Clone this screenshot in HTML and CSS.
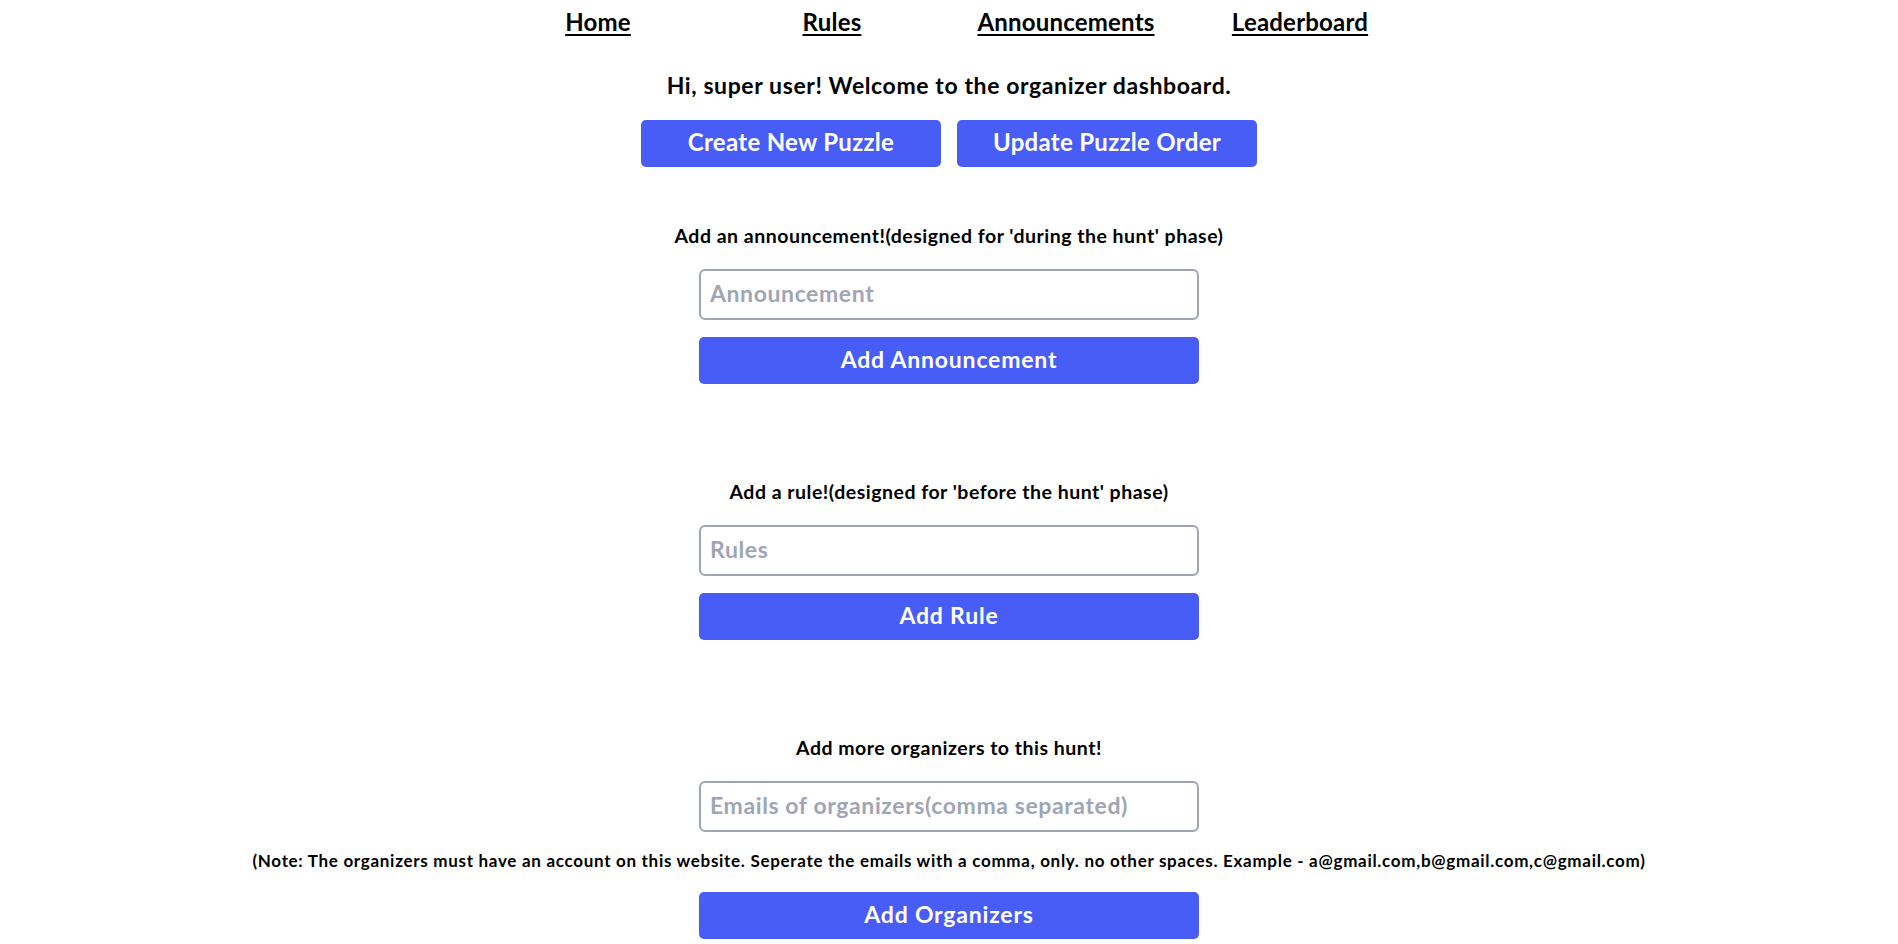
FILE: index.html
```html
<!DOCTYPE html>
<html lang="en">
<head>
<meta charset="utf-8">
<title>Organizer Dashboard</title>
<link rel="stylesheet" href="styles.css">
</head>
<body>
<nav class="nav">
  <a class="nav-link" href="#">Home</a>
  <a class="nav-link" href="#">Rules</a>
  <a class="nav-link" href="#">Announcements</a>
  <a class="nav-link" href="#">Leaderboard</a>
</nav>
<main class="main">
  <h1 class="welcome">Hi, super user! Welcome to the organizer dashboard.</h1>
  <div class="top-actions">
    <button class="btn btn-top">Create New Puzzle</button>
    <button class="btn btn-top">Update Puzzle Order</button>
  </div>

  <section class="section section-first">
    <h2 class="section-title">Add an announcement!(designed for 'during the hunt' phase)</h2>
    <input class="field" type="text" placeholder="Announcement">
    <button class="btn btn-wide">Add Announcement</button>
  </section>

  <section class="section">
    <h2 class="section-title">Add a rule!(designed for 'before the hunt' phase)</h2>
    <input class="field" type="text" placeholder="Rules">
    <button class="btn btn-wide">Add Rule</button>
  </section>

  <section class="section">
    <h2 class="section-title">Add more organizers to this hunt!</h2>
    <input class="field" type="text" placeholder="Emails of organizers(comma separated)">
    <p class="note">(Note: The organizers must have an account on this website. Seperate the emails with a comma, only. no other spaces. Example - a@gmail.com,b@gmail.com,c@gmail.com)</p>
    <button class="btn btn-wide btn-after-note">Add Organizers</button>
  </section>
</main>
</body>
</html>
```

FILE: styles.css
```css
* {
  box-sizing: border-box;
}

html, body {
  margin: 0;
  padding: 0;
  background: #ffffff;
}

body {
  font-family: "Lato", "Liberation Sans", sans-serif;
  font-weight: 700;
  color: #000000;
}

.nav {
  display: grid;
  grid-template-columns: repeat(4, 234px);
  justify-content: center;
  padding-top: 7px;
}

.nav-link {
  text-align: center;
  font-size: 24px;
  line-height: 30px;
  letter-spacing: 0.2px;
  color: #000000;
  text-decoration: underline;
  text-decoration-thickness: 2px;
  text-underline-offset: 3px;
}

.main {
  display: flex;
  flex-direction: column;
  align-items: center;
}

.welcome {
  margin: 34px 0 0;
  font-size: 23px;
  line-height: 28px;
  letter-spacing: 0.6px;
  font-weight: 700;
}

.top-actions {
  display: flex;
  gap: 16px;
  margin-top: 21px;
}

.btn {
  font-family: inherit;
  font-weight: 700;
  color: #ffffff;
  background: #485cf6;
  border: none;
  border-radius: 5px;
  height: 47px;
  padding: 0 0 4px;
  cursor: pointer;
}

.btn-top {
  width: 300px;
  font-size: 24px;
  letter-spacing: 0.3px;
}

.section {
  display: flex;
  flex-direction: column;
  align-items: center;
}

.section + .section {
  margin-top: 96px;
}

.section-first {
  margin-top: 57px;
}

.section-title {
  margin: 0;
  font-size: 19.5px;
  line-height: 24px;
  letter-spacing: 0.5px;
  font-weight: 700;
}

.field {
  margin-top: 21px;
  width: 500px;
  height: 51px;
  border: 2px solid #a0a5b4;
  border-radius: 6px;
  padding: 0 9px 3px;
  font-family: inherit;
  font-weight: 700;
  font-size: 23px;
  letter-spacing: 0.6px;
  color: #000000;
  outline: none;
}

.field::placeholder {
  color: #a0a5b5;
  opacity: 1;
}

.btn-wide {
  margin-top: 17px;
  width: 500px;
  font-size: 23px;
  letter-spacing: 0.8px;
}

.note {
  margin: 19px 0 0;
  font-size: 17px;
  line-height: 20px;
  letter-spacing: 0.7px;
  white-space: nowrap;
}

.btn-after-note {
  margin-top: 21px;
}
```
